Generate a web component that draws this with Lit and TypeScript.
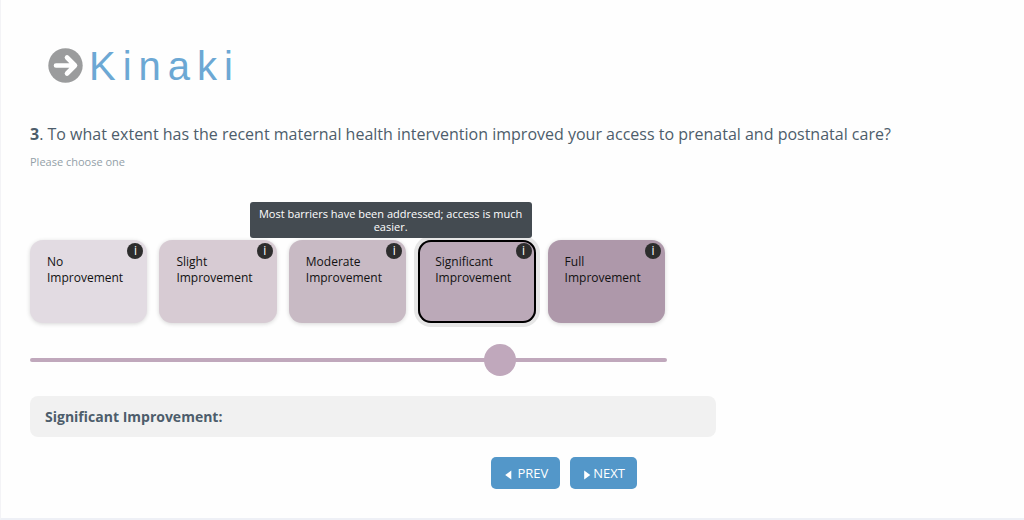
import { LitElement, html, css, nothing } from "lit";
import { customElement, state } from "lit/decorators.js";
import { classMap } from "lit/directives/class-map.js";

interface Option {
  first: string;
  second: string;
  tone: string;
  hint: string;
}

const OPTIONS: Option[] = [
  { first: "No", second: "Improvement", tone: "tone-1", hint: "" },
  { first: "Slight", second: "Improvement", tone: "tone-2", hint: "" },
  { first: "Moderate", second: "Improvement", tone: "tone-3", hint: "" },
  {
    first: "Significant",
    second: "Improvement",
    tone: "tone-4",
    hint: "Most barriers have been addressed; access is much easier.",
  },
  { first: "Full", second: "Improvement", tone: "tone-5", hint: "" },
];

@customElement("app-root")
export class AppRoot extends LitElement {
  @state() private selected = 3;

  static styles = css`
    :host {
      display: block;
      box-sizing: border-box;
      min-height: 100vh;
      padding: 44px 29px 29px;
      border-left: 1px solid #f3f3f6;
      border-bottom: 2px solid #eef0f6;
      background: #fefefe;
      color: #4d5d6b;
      font-family: "Open Sans", "Noto Sans", sans-serif;
    }
    * {
      box-sizing: border-box;
    }
    .logo {
      display: flex;
      align-items: center;
      gap: 6px;
      padding-left: 18px;
      color: #6ca8d4;
      font: 40px/44px "Liberation Sans", Arial, sans-serif;
      letter-spacing: 7px;
    }
    .logo svg {
      width: 35px;
      height: 35px;
      margin-bottom: 2px;
    }
    .question {
      margin: 34px 0 0;
      font-size: 16px;
      line-height: 24px;
      font-weight: 400;
    }
    .help {
      margin: 8px 0 0;
      color: #93a0a8;
      font-size: 11px;
      line-height: 16px;
    }
    fieldset {
      margin: 0;
      padding: 0;
      border: 0;
      min-width: 0;
    }
    .cards {
      display: grid;
      grid-template-columns: repeat(5, 1fr);
      gap: 12px;
      max-width: 635px;
      margin-top: 70px;
    }
    .card {
      position: relative;
      height: 83px;
      border-radius: 13px;
      box-shadow: 0 1px 4px rgba(0, 0, 0, 0.16);
    }
    .card label {
      display: block;
      height: 100%;
      padding: 14px 0 0 17px;
      color: #111;
      font-size: 12px;
      line-height: 16px;
      cursor: pointer;
    }
    .card label span {
      display: block;
    }
    .card input {
      position: absolute;
      opacity: 0;
      margin: 0;
    }
    .tone-1 { background: #e2dbe2; }
    .tone-2 { background: #d7cbd3; }
    .tone-3 { background: #c8bac4; }
    .tone-4 { background: #bba9b8; }
    .tone-5 { background: #ae98aa; }
    .selected {
      box-shadow: inset 0 0 0 2px #000, 0 0 0 4px #e6e6e6;
    }
    .info {
      position: absolute;
      top: 3px;
      right: 4px;
      width: 16px;
      height: 16px;
      padding: 0;
      border: 0;
      border-radius: 50%;
      background: #2d2d2d;
      color: #fff;
      font: 12px/16px "Open Sans", sans-serif;
      text-align: center;
    }
    .tooltip {
      position: absolute;
      z-index: 1;
      right: 4px;
      bottom: 85px;
      width: 282px;
      padding: 5px 6px;
      border-radius: 3px;
      background: #444b51;
      color: #fff;
      font-size: 11px;
      line-height: 13px;
      text-align: center;
    }
    .slider {
      display: block;
      appearance: none;
      width: 100%;
      max-width: 637px;
      height: 32px;
      margin: 21px 0 0;
      background: transparent;
    }
    .slider::-webkit-slider-runnable-track {
      height: 4px;
      border-radius: 2px;
      background: #c0a8bc;
    }
    .slider::-webkit-slider-thumb {
      appearance: none;
      width: 32px;
      height: 32px;
      margin-top: -14px;
      border: 0;
      border-radius: 50%;
      background: #c0a8bc;
    }
    .answer {
      display: block;
      max-width: 686px;
      margin-top: 20px;
      padding: 11px 15px 10px;
      border-radius: 8px;
      background: #f1f1f1;
      font-size: 14px;
      line-height: 20px;
      font-weight: 700;
    }
    .nav {
      display: flex;
      justify-content: flex-end;
      gap: 10px;
      max-width: 607px;
      margin-top: 20px;
    }
    .nav button {
      display: flex;
      align-items: center;
      height: 32px;
      padding: 0 12px 0 13px;
      border: 0;
      border-radius: 5px;
      background: #5397c9;
      color: #fff;
      font: 13px/16px "Open Sans", "Noto Sans", sans-serif;
    }
    .nav svg {
      width: 8px;
      height: 10px;
      margin-top: 3px;
    }
    .prev { gap: 5px; }
    .next { gap: 2px; }
  `;

  private card(option: Option, index: number) {
    const selected = index === this.selected;
    return html`
      <div class=${classMap({ card: true, [option.tone]: true, selected })}>
        <input
          type="radio"
          name="access"
          id="option-${index}"
          .checked=${selected}
          @change=${() => (this.selected = index)}
        />
        <label for="option-${index}"><span>${option.first}</span><span>${option.second}</span></label>
        <button class="info" type="button">i</button>
        ${selected && option.hint ? html`<div class="tooltip" role="tooltip">${option.hint}</div>` : nothing}
      </div>
    `;
  }

  render() {
    const current = OPTIONS[this.selected];
    return html`
      <header class="logo">
        <svg viewBox="0 0 35 35" aria-hidden="true">
          <circle cx="17.5" cy="17.5" r="17.2" fill="#9b9c9d" />
          <path d="M8 17.5H26M19 9.5L27 17.5L19 25.5" fill="none" stroke="#fff" stroke-width="4.6" stroke-linecap="round" stroke-linejoin="round" />
        </svg>
        <span>Kinaki</span>
      </header>
      <main>
        <h1 class="question"><b>3</b>. To what extent has the recent maternal health intervention improved your access to prenatal and postnatal care?</h1>
        <p class="help">Please choose one</p>
        <fieldset>
          <div class="cards">${OPTIONS.map((option, index) => this.card(option, index))}</div>
        </fieldset>
        <input
          class="slider"
          type="range"
          min="0"
          max="4"
          aria-label="Improvement"
          .value=${String(this.selected)}
          @input=${(e: Event) => (this.selected = Number((e.target as HTMLInputElement).value))}
        />
        <output class="answer">${current.first} ${current.second}:</output>
        <nav class="nav">
          <button class="prev" type="button">
            <svg viewBox="0 0 8 10" aria-hidden="true"><path d="M7.3 .6V9.4L1.2 5Z" fill="#fff" /></svg>
            PREV
          </button>
          <button class="next" type="button">
            <svg viewBox="0 0 8 10" aria-hidden="true"><path d="M1.2 .6V9.4L7.3 5Z" fill="#fff" /></svg>
            NEXT
          </button>
        </nav>
      </main>
    `;
  }
}
